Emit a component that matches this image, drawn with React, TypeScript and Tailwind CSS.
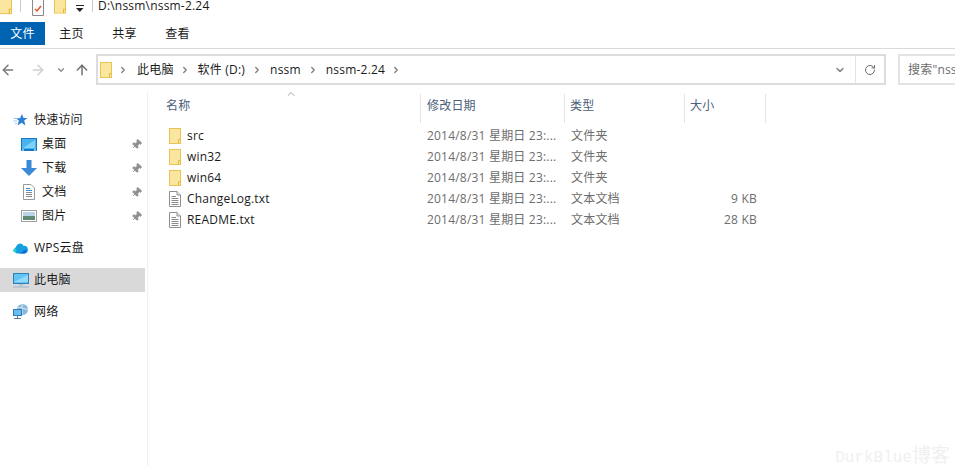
import { ChevronDown, ChevronRight, ChevronUp, ArrowLeft, ArrowRight, ArrowUp, RotateCw, Pin } from "lucide-react";

const font = { fontFamily: '"Open Sans", "Noto Sans CJK SC", sans-serif' };

function FolderIcon({ w = 12, h = 16 }: { w?: number; h?: number }) {
  return (
    <svg width={w} height={h} viewBox="0 0 12 16" className="shrink-0">
      <rect x="0.5" y="0.5" width="11" height="15" fill="#fde48f" stroke="#e9c455" />
      <rect x="1" y="1" width="10" height="14" fill="#fbe69f" />
      <path d="M9.5 15.5V11.5H11.5" fill="none" stroke="#e5b93d" />
    </svg>
  );
}

function TxtIcon() {
  return (
    <svg width="12" height="16" viewBox="0 0 12 16" className="shrink-0">
      <path d="M.5.5H8L11.5 4V15.5H.5Z" fill="#fff" stroke="#8f8f8f" />
      <path d="M8 .5V4H11.5" fill="#e8e8e8" stroke="#8f8f8f" />
      <path d="M2.5 5.5H7M2.5 7.5H9.5M2.5 9.5H9.5M2.5 11.5H9.5M2.5 13.5H9.5" stroke="#8a8a8a" />
    </svg>
  );
}

function QuickIcon() {
  return (
    <svg width="15" height="14" viewBox="0 0 15 14">
      <path d="M9 1L10.5 5H14.5L11.2 7.6L12.4 12.5L8.5 9.8L4.6 12.5L5.8 7.6L3 5.2H7Z" fill="#2b7fd4" />
      <path d="M0.5 5.5H3M0.5 8H4M2 10.5H4" stroke="#9cc6ea" />
    </svg>
  );
}

function DesktopIcon() {
  return (
    <svg width="16" height="13" viewBox="0 0 16 13">
      <rect x="0" y="0" width="16" height="13" fill="#1678c8" />
      <rect x="1" y="1" width="14" height="10" fill="#49b3ee" />
      <path d="M2 10L14 2V10Z" fill="#7fd0f7" />
      <path d="M1 12H3M13 12H15" stroke="#fff" />
    </svg>
  );
}

function DownloadIcon() {
  return (
    <svg width="16" height="16" viewBox="0 0 16 16">
      <path d="M5.5 0H10.500V8H16L8 16L0 8H5.500Z" fill="#3a8ad8" />
    </svg>
  );
}

function DocIcon() {
  return (
    <svg width="12" height="16" viewBox="0 0 12 16">
      <path d="M.5.5H8L11.500 4V15.500H.5Z" fill="#fff" stroke="#9a9a9a" />
      <path d="M3 4.500H7M3 6.500H9" stroke="#3f8fd6" />
      <path d="M3 8.500H9M3 10.500H9M3 12.500H9" stroke="#8a8a8a" />
    </svg>
  );
}

function PictureIcon() {
  return (
    <svg width="16" height="12" viewBox="0 0 16 12">
      <rect x="0.5" y="0.500" width="15" height="11" fill="#fff" stroke="#a0a0a0" />
      <rect x="2" y="2" width="12" height="4" fill="#b9d4ea" />
      <rect x="2" y="6" width="12" height="4" fill="#5f8a76" />
    </svg>
  );
}

function CloudIcon() {
  return (
    <svg width="15" height="12" viewBox="0 0 15 12">
      <path d="M4 11.500A3.500 3.500 0 0 1 3 5A4 4 0 0 1 10.500 3.800A3.800 3.800 0 0 1 11.500 11.500Z" fill="#14a0e0" />
      <path d="M6 11.500C9 11 10.500 8 13.500 7.500A3.500 3.500 0 0 1 11.500 11.500Z" fill="#1467d8" />
      <circle cx="1.800" cy="8.500" r="1.800" fill="#27d0c8" />
    </svg>
  );
}

function PcIcon() {
  return (
    <svg width="16" height="15" viewBox="0 0 16 15">
      <rect x="0" y="0" width="16" height="11" fill="#2f7fb8" />
      <rect x="1" y="1" width="14" height="9" fill="#62c3f5" />
      <path d="M1 9L15 2V9Z" fill="#93dafa" />
      <path d="M6 12H10" stroke="#9ab5c9" />
      <path d="M0 14H16" stroke="#9ab5c9" />
    </svg>
  );
}

function NetworkIcon() {
  return (
    <svg width="16" height="16" viewBox="0 0 16 16">
      <circle cx="9.500" cy="5.500" r="5.500" fill="#8ab8dc" />
      <path d="M5 4C8 2 11 6 15 5M9 0V10" stroke="#d8e8f2" fill="none" />
      <rect x="0" y="5" width="9" height="7" fill="#2f7cb8" />
      <rect x="1" y="6" width="7" height="5" fill="#66bdf0" />
      <path d="M4.500 12V14M1 14.500H8" stroke="#5a7f9c" />
    </svg>
  );
}

function Crumb({ label, ml }: { label: string; ml: string }) {
  return <span className={ml}>{label}</span>;
}

function Sep({ ml }: { ml: string }) {
  return <ChevronRight size={10} strokeWidth={3} className={`${ml} shrink-0 text-[#7a7a7a]`} />;
}

function NavItem({ icon, label, pinned, selected, indent }: { icon: React.ReactNode; label: string; pinned?: boolean; selected?: boolean; indent?: boolean }) {
  return (
    <div className={`flex h-6 items-center ${indent ? "pl-[21px]" : "pl-[13px]"} ${selected ? "bg-[#d9d9d9]" : ""}`}>
      <div className="flex h-4 w-[21px] items-center justify-start">{icon}</div>
      <span className="flex-1 text-[12px] text-[#1a1a1a]">{label}</span>
      {pinned && <Pin size={11} className="mr-[3px] rotate-45 fill-[#8f8f8f] text-[#8f8f8f]" />}
    </div>
  );
}

const files = [
  { name: "src", type: "文件夹", size: "" },
  { name: "win32", type: "文件夹", size: "" },
  { name: "win64", type: "文件夹", size: "" },
  { name: "ChangeLog.txt", type: "文本文档", size: "9 KB" },
  { name: "README.txt", type: "文本文档", size: "28 KB" },
];

export default function App() {
  return (
    <div className="flex h-[466px] w-[955px] flex-col overflow-hidden bg-white tracking-[0.2px]" style={font}>
      {/* title bar */}
      <div className="flex h-[22px] items-start overflow-hidden">
        <div className="-mt-1 -ml-[1px]"><FolderIcon w={13} h={19} /></div>
        <div className="ml-[8px] h-3 w-px bg-[#c8c8c8]" />
        <svg width="12" height="16" viewBox="0 0 12 16" className="ml-[11px]">
          <path d="M.5 0V15.500H11.500V0" fill="#fbfbfb" stroke="#8a8a8a" />
          <path d="M3 9L5 11L9 6" fill="none" stroke="#e0562a" strokeWidth="1.500" />
        </svg>
        <div className="-mt-1 ml-[10px]"><FolderIcon w={12} h={19} /></div>
        <svg width="8" height="8" viewBox="0 0 8 8" className="mt-[5px] ml-[10px]">
          <path d="M0 .5H8" stroke="#222" />
          <path d="M0 3H7.500L3.800 7Z" fill="#222" />
        </svg>
        <div className="ml-[8px] h-3 w-px bg-[#c8c8c8]" />
        <span className="ml-[5px] text-[12px] leading-[12px] text-[#1a1a1a]">D:\nssm\nssm-2.24</span>
      </div>

      {/* ribbon tabs */}
      <div className="flex h-[27px] border-b border-[#dadada] text-[12px] text-[#1a1a1a]">
        <div className="flex h-[23px] w-[45px] items-center justify-center bg-[#0063b1] text-white">文件</div>
        <div className="flex h-[23px] w-[53px] items-center justify-center">主页</div>
        <div className="flex h-[23px] w-[53px] items-center justify-center">共享</div>
        <div className="flex h-[23px] w-[53px] items-center justify-center">查看</div>
      </div>

      {/* nav row */}
      <div className="flex h-[37px] items-start pt-[5px]">
        <div className="flex h-[31px] w-[96px] shrink-0 items-center">
          <ArrowLeft size={16} strokeWidth={2.2} className="text-[#7a7a7a]" />
          <ArrowRight size={16} strokeWidth={2.2} className="ml-[14px] text-[#d0d0d0]" />
          <ChevronDown size={10} strokeWidth={3} className="ml-[10px] text-[#8a8a8a]" />
          <ArrowUp size={16} strokeWidth={2.2} className="ml-[8px] text-[#6e6e6e]" />
        </div>
        <div className="flex h-[31px] w-[790px] shrink-0 items-center border-2 border-[#dcdcdc] text-[12px] text-[#1a1a1a]">
          <div className="ml-[2px]"><FolderIcon /></div>
          <Sep ml="ml-[6px]" />
          <Crumb label="此电脑" ml="ml-[9px]" />
          <Sep ml="ml-[6px]" />
          <Crumb label="软件 (D:)" ml="ml-[8px]" />
          <Sep ml="ml-[7px]" />
          <Crumb label="nssm" ml="ml-[8px]" />
          <Sep ml="ml-[7px]" />
          <Crumb label="nssm-2.24" ml="ml-[8px]" />
          <Sep ml="ml-[6px]" />
          <div className="flex-1" />
          <ChevronDown size={12} strokeWidth={2.5} className="mr-[9px] text-[#777777]" />
          <div className="flex h-full w-[29px] items-center justify-center border-l border-[#e3e3e3]">
            <RotateCw size={12} strokeWidth={2} className="text-[#6e6e6e]" />
          </div>
        </div>
        <div className="ml-[12px] flex h-[31px] flex-1 items-center overflow-hidden border-2 border-r-0 border-[#e3e3e3] pl-[8px] text-[12px] whitespace-nowrap text-[#6d6d6d]">
          搜索"nss
        </div>
      </div>

      {/* body */}
      <div className="relative flex flex-1">
        <div className="mr-[2px] w-[145px] shrink-0 pt-[22px]">
          <NavItem icon={<QuickIcon />} label="快速访问" />
          <NavItem indent icon={<DesktopIcon />} label="桌面" pinned />
          <NavItem indent icon={<DownloadIcon />} label="下载" pinned />
          <NavItem indent icon={<div className="ml-[2px]"><DocIcon /></div>} label="文档" pinned />
          <NavItem indent icon={<PictureIcon />} label="图片" pinned />
          <div className="h-2" />
          <NavItem icon={<CloudIcon />} label="WPS云盘" />
          <div className="h-2" />
          <NavItem icon={<PcIcon />} label="此电脑" selected />
          <div className="h-2" />
          <NavItem icon={<NetworkIcon />} label="网络" />
        </div>

        <div className="mt-[6px] w-px shrink-0 bg-[#f0f0f0]" />

        <div className="flex-1">
          {/* column headers */}
          <div className="relative flex h-[37px] pt-[8px] text-[12px] text-[#4c607a]">
            <div className="flex h-[29px] w-[273px] items-center border-r border-[#e5e5e5] pb-[6px] pl-[18px]">名称</div>
            <div className="flex h-[29px] w-[144px] items-center border-r border-[#e5e5e5] pb-[6px] pl-[6px]">修改日期</div>
            <div className="flex h-[29px] w-[120px] items-center border-r border-[#e5e5e5] pb-[6px] pl-[5px]">类型</div>
            <div className="flex h-[29px] w-[81px] items-center border-r border-[#e5e5e5] pb-[6px] pl-[5px]">大小</div>
            <ChevronUp size={12} strokeWidth={1.5} className="absolute top-[2px] left-[137px] text-[#8a8a8a]" />
          </div>

          {/* file rows */}
          <div className="pt-[2px]">
            {files.map((f) => (
              <div key={f.name} className="flex h-[21px] items-center text-[12px] text-[#6d6d6d]">
                <div className="flex w-[273px] items-center pl-[21px]">
                  {f.size ? <TxtIcon /> : <FolderIcon />}
                  <span className="ml-[6px] text-[#1a1a1a]">{f.name}</span>
                </div>
                <div className="w-[144px] pl-[6px] whitespace-nowrap">2014/8/31 星期日 23:...</div>
                <div className="w-[120px] pl-[6px]">{f.type}</div>
                <div className="w-[72px] text-right">{f.size}</div>
              </div>
            ))}
          </div>
        </div>

        {/* watermark */}
        <span className="absolute right-[5px] bottom-0 flex items-baseline text-[16px] leading-[16px] tracking-normal text-[#f0f0f0]" style={{ fontFamily: '"Liberation Mono", "Noto Sans CJK SC", monospace' }}>
          DurkBlue<span className="text-[19px]">博客</span>
        </span>
      </div>
    </div>
  );
}
